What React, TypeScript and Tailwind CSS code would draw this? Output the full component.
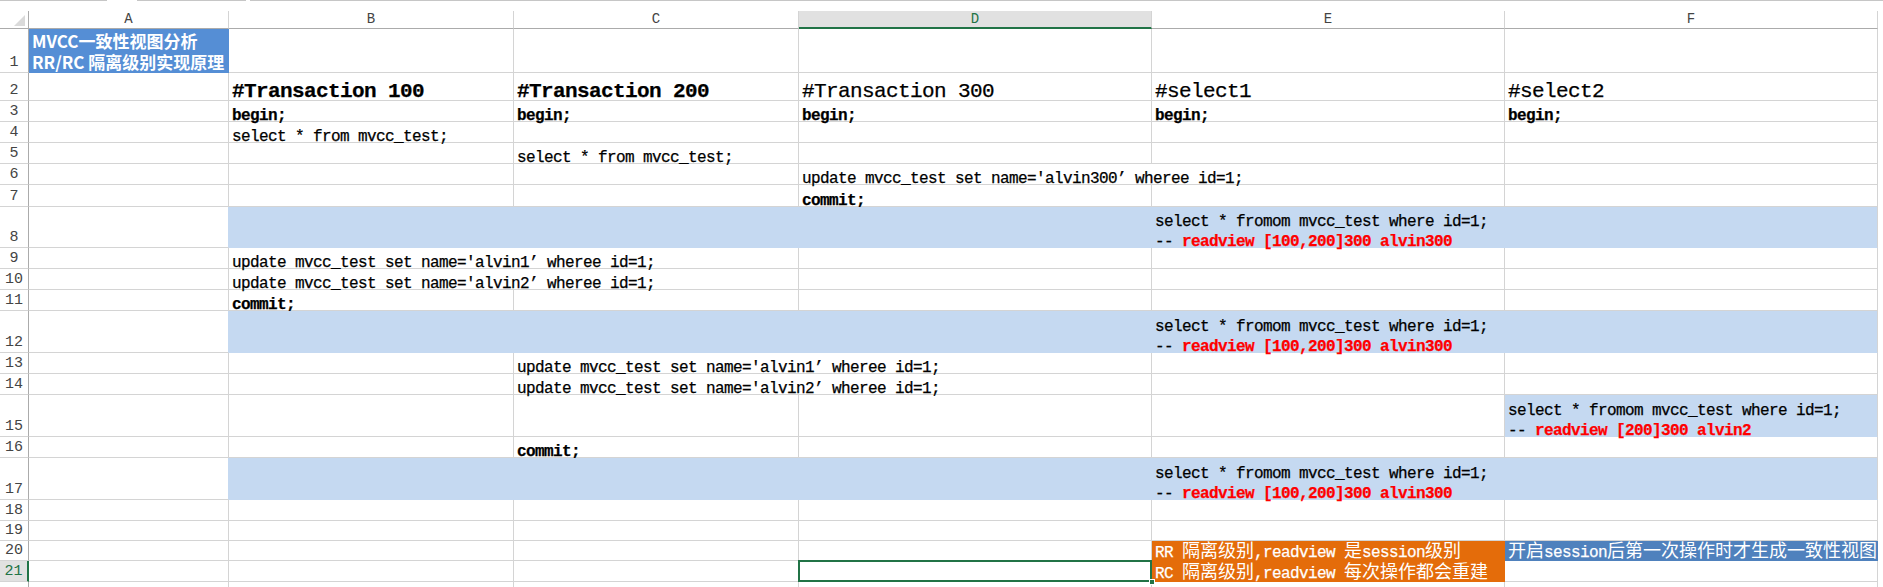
import React from "react";

type Kids = { children?: React.ReactNode };

const GRID = "border-[#d4d4d4]";
const BLUE = "bg-[#c5d9f1] border-[#c5d9f1]";

function L({ children }: Kids) {
  return <div className="leading-[20px]">{children}</div>;
}

function T({ children }: Kids) {
  return <div className="mb-[-5px]">{children}</div>;
}

function TU({ children }: Kids) {
  return <div className="mb-[-3px]">{children}</div>;
}

function R({ children }: Kids) {
  return <span className="font-bold text-[#ff0000]">{children}</span>;
}

function Z({ children }: Kids) {
  return (
    <span className="font-['Noto_Sans_CJK_SC',sans-serif] text-[18px] tracking-normal [-webkit-text-stroke:0px]">
      {children}
    </span>
  );
}

function H({ children, bold }: Kids & { bold?: boolean }) {
  return (
    <div
      className={`mb-[-2px] text-[21px] leading-[20px] tracking-[-0.6px] ${
        bold ? "font-bold" : ""
      }`}
    >
      {children}
    </div>
  );
}

function Cell({
  w,
  cls = GRID,
  children,
  rel,
}: Kids & { w: string; cls?: string; rel?: boolean }) {
  return (
    <div
      className={`${w} shrink-0 h-full border-r border-b ${cls} flex flex-col justify-end pl-[3px] whitespace-nowrap ${
        rel ? "relative" : ""
      }`}
    >
      {children}
    </div>
  );
}

function RowHead({ n, sel }: { n?: number; sel?: boolean }) {
  return (
    <div
      className={`w-[29px] shrink-0 h-full border-b flex items-end justify-center font-['Liberation_Mono',monospace] text-[15px] leading-[20px] tracking-normal [-webkit-text-stroke:0px] ${
        sel
          ? "bg-[#e1e1e1] text-[#217346] border-r-2 border-r-[#217346] border-b-[#d4d4d4]"
          : "text-[#444444] border-r border-r-[#ababab] border-b-[#d4d4d4]"
      }`}
    >
      <span className="mb-[-1px]">{n}</span>
    </div>
  );
}

function Row({ h, n, sel, children }: Kids & { h: string; n?: number; sel?: boolean }) {
  return (
    <div className={`flex ${h}`}>
      <RowHead n={n} sel={sel} />
      {children}
    </div>
  );
}

function ColHead({ w, label, sel }: { w: string; label: string; sel?: boolean }) {
  return (
    <div
      className={`${w} shrink-0 h-full flex items-center justify-center font-['Liberation_Mono',monospace] text-[14px] tracking-normal [-webkit-text-stroke:0px] border-r border-r-[#d4d4d4] ${
        sel
          ? "bg-[#e1e1e1] text-[#217346] border-b-2 border-b-[#217346]"
          : "text-[#444444] border-b border-b-[#ababab]"
      }`}
    >
      {label}
    </div>
  );
}

const A = "w-[200px]";
const B = "w-[285px]";
const C = "w-[285px]";
const D = "w-[353px]";
const E = "w-[353px]";
const F = "w-[373px]";

function EmptyRest() {
  return (
    <>
      <Cell w={B} />
      <Cell w={C} />
      <Cell w={D} />
      <Cell w={E} />
      <Cell w={F} />
    </>
  );
}

function BandRow({ h, n }: { h: string; n: number }) {
  return (
    <Row h={h} n={n}>
      <Cell w={A} cls="border-b-[#d4d4d4] border-r-[#c5d9f1]" />
      <Cell w="w-[923px]" cls={BLUE} />
      <Cell w={E} cls={BLUE}>
        <T>
          <L>select * fromom mvcc_test where id=1;</L>
          <L>
            -- <R>readview [100,200]300 alvin300</R>
          </L>
        </T>
      </Cell>
      <Cell w={F} cls="bg-[#c5d9f1] border-b-[#c5d9f1] border-r-[#d4d4d4]" />
    </Row>
  );
}

export default function App() {
  return (
    <div className="w-[1883px] h-[587px] overflow-hidden bg-white text-black font-['Liberation_Mono','Noto_Sans_CJK_SC',monospace] text-[16px] tracking-[-0.6px] [-webkit-text-stroke:0.25px]">
      {/* top strip */}
      <div className="h-[11px] flex">
        <div className="w-[107px] border-t border-[#c6c6c6]" />
        <div className="w-[30px]" />
        <div className="w-[109px] border-t border-[#c6c6c6]" />
        <div className="w-[4px]" />
        <div className="flex-1 border-t border-[#c6c6c6]" />
      </div>

      {/* column header */}
      <div className="flex h-[18px]">
        <div className="w-[29px] shrink-0 h-full border-r border-b border-[#ababab] flex items-end justify-end">
          <svg width="13" height="13" viewBox="0 0 13 13" className="mb-[1px] mr-[2px]">
            <polygon points="12,1 12,12 1,12" fill="#dadada" />
          </svg>
        </div>
        <ColHead w={A} label="A" />
        <ColHead w={B} label="B" />
        <ColHead w={C} label="C" />
        <ColHead w={D} label="D" sel />
        <ColHead w={E} label="E" />
        <ColHead w={F} label="F" />
      </div>

      {/* row 1 */}
      <Row h="h-[44px]" n={1}>
        <Cell w={A} cls="bg-[#558ed5] border-[#558ed5]">
          <div className="font-['Noto_Sans_CJK_SC',sans-serif] font-bold text-[17px] leading-[21px] tracking-normal text-white [-webkit-text-stroke:0px]">
            <div>MVCC一致性视图分析</div>
            <div>RR/RC 隔离级别实现原理</div>
          </div>
        </Cell>
        <EmptyRest />
      </Row>

      {/* row 2 */}
      <Row h="h-[28px]" n={2}>
        <Cell w={A} />
        <Cell w={B}>
          <H bold>#Transaction 100</H>
        </Cell>
        <Cell w={C}>
          <H bold>#Transaction 200</H>
        </Cell>
        <Cell w={D}>
          <H>#Transaction 300</H>
        </Cell>
        <Cell w={E}>
          <H>#select1</H>
        </Cell>
        <Cell w={F}>
          <H>#select2</H>
        </Cell>
      </Row>

      {/* row 3 */}
      <Row h="h-[21px]" n={3}>
        <Cell w={A} />
        <Cell w={B}>
          <T>
            <L>
              <b>begin;</b>
            </L>
          </T>
        </Cell>
        <Cell w={C}>
          <T>
            <L>
              <b>begin;</b>
            </L>
          </T>
        </Cell>
        <Cell w={D}>
          <T>
            <L>
              <b>begin;</b>
            </L>
          </T>
        </Cell>
        <Cell w={E}>
          <T>
            <L>
              <b>begin;</b>
            </L>
          </T>
        </Cell>
        <Cell w={F}>
          <T>
            <L>
              <b>begin;</b>
            </L>
          </T>
        </Cell>
      </Row>

      {/* row 4 */}
      <Row h="h-[21px]" n={4}>
        <Cell w={A} />
        <Cell w={B}>
          <T>
            <L>select * from mvcc_test;</L>
          </T>
        </Cell>
        <Cell w={C} />
        <Cell w={D} />
        <Cell w={E} />
        <Cell w={F} />
      </Row>

      {/* row 5 */}
      <Row h="h-[21px]" n={5}>
        <Cell w={A} />
        <Cell w={B} />
        <Cell w={C}>
          <T>
            <L>select * from mvcc_test;</L>
          </T>
        </Cell>
        <Cell w={D} />
        <Cell w={E} />
        <Cell w={F} />
      </Row>

      {/* row 6 */}
      <Row h="h-[21px]" n={6}>
        <Cell w={A} />
        <Cell w={B} />
        <Cell w={C} />
        <Cell w="w-[706px]">
          <T>
            <L>update mvcc_test set name='alvin300’ wheree id=1;</L>
          </T>
        </Cell>
        <Cell w={F} />
      </Row>

      {/* row 7 */}
      <Row h="h-[22px]" n={7}>
        <Cell w={A} />
        <Cell w={B} />
        <Cell w={C} />
        <Cell w={D}>
          <T>
            <L>
              <b>commit;</b>
            </L>
          </T>
        </Cell>
        <Cell w={E} />
        <Cell w={F} />
      </Row>

      <BandRow h="h-[41px]" n={8} />

      {/* row 9 */}
      <Row h="h-[21px]" n={9}>
        <Cell w={A} />
        <Cell w="w-[570px]">
          <T>
            <L>update mvcc_test set name='alvin1’ wheree id=1;</L>
          </T>
        </Cell>
        <Cell w={D} />
        <Cell w={E} />
        <Cell w={F} />
      </Row>

      {/* row 10 */}
      <Row h="h-[21px]" n={10}>
        <Cell w={A} />
        <Cell w="w-[570px]">
          <T>
            <L>update mvcc_test set name='alvin2’ wheree id=1;</L>
          </T>
        </Cell>
        <Cell w={D} />
        <Cell w={E} />
        <Cell w={F} />
      </Row>

      {/* row 11 */}
      <Row h="h-[21px]" n={11}>
        <Cell w={A} />
        <Cell w={B}>
          <T>
            <L>
              <b>commit;</b>
            </L>
          </T>
        </Cell>
        <Cell w={C} />
        <Cell w={D} />
        <Cell w={E} />
        <Cell w={F} />
      </Row>

      <BandRow h="h-[42px]" n={12} />

      {/* row 13 */}
      <Row h="h-[21px]" n={13}>
        <Cell w={A} />
        <Cell w={B} />
        <Cell w="w-[638px]">
          <T>
            <L>update mvcc_test set name='alvin1’ wheree id=1;</L>
          </T>
        </Cell>
        <Cell w={E} />
        <Cell w={F} />
      </Row>

      {/* row 14 */}
      <Row h="h-[21px]" n={14}>
        <Cell w={A} />
        <Cell w={B} />
        <Cell w="w-[638px]">
          <T>
            <L>update mvcc_test set name='alvin2’ wheree id=1;</L>
          </T>
        </Cell>
        <Cell w={E} />
        <Cell w={F} />
      </Row>

      {/* row 15 */}
      <Row h="h-[42px]" n={15}>
        <Cell w={A} />
        <Cell w={B} />
        <Cell w={C} />
        <Cell w={D} />
        <Cell w={E} />
        <Cell w={F} cls="bg-[#c5d9f1] border-b-[#c5d9f1] border-r-[#d4d4d4]">
          <T>
            <L>select * fromom mvcc_test where id=1;</L>
            <L>
              -- <R>readview [200]300 alvin2</R>
            </L>
          </T>
        </Cell>
      </Row>

      {/* row 16 */}
      <Row h="h-[21px]" n={16}>
        <Cell w={A} />
        <Cell w={B} />
        <Cell w={C}>
          <T>
            <L>
              <b>commit;</b>
            </L>
          </T>
        </Cell>
        <Cell w={D} />
        <Cell w={E} />
        <Cell w={F} />
      </Row>

      <BandRow h="h-[42px]" n={17} />

      {/* row 18 */}
      <Row h="h-[21px]" n={18}>
        <Cell w={A} />
        <EmptyRest />
      </Row>

      {/* row 19 */}
      <Row h="h-[20px]" n={19}>
        <Cell w={A} />
        <EmptyRest />
      </Row>

      {/* row 20 */}
      <Row h="h-[20px]" n={20}>
        <Cell w={A} />
        <Cell w={B} />
        <Cell w={C} />
        <Cell w={D} />
        <Cell w={E} cls="bg-[#e46c0a] border-[#e46c0a] text-white">
          <TU>
            <L>
              RR <Z>隔离级别</Z>,readview <Z>是</Z>session<Z>级别</Z>
            </L>
          </TU>
        </Cell>
        <Cell w={F} cls="bg-[#4f81bd] border-[#4f81bd] text-white">
          <TU>
            <L>
              <Z>开启</Z>session<Z>后第一次操作时才生成一致性视图</Z>
            </L>
          </TU>
        </Cell>
      </Row>

      {/* row 21 */}
      <Row h="h-[21px]" n={21} sel>
        <Cell w={A} />
        <Cell w={B} />
        <Cell w={C} />
        <Cell w={D} rel>
          <div className="absolute left-[-1px] top-[-1px] right-[-1px] bottom-[-1px] border-2 border-[#217346] z-10" />
          <div className="absolute right-[-4px] bottom-[-4px] w-[6px] h-[6px] bg-[#217346] border border-white z-20" />
        </Cell>
        <Cell w={E} cls="bg-[#e46c0a] border-[#e46c0a] text-white">
          <TU>
            <L>
              RC <Z>隔离级别</Z>,readview <Z>每次操作都会重建</Z>
            </L>
          </TU>
        </Cell>
        <Cell w={F} />
      </Row>

      {/* row 22 (only its top edge is visible) */}
      <Row h="h-[21px]">
        <Cell w={A} />
        <EmptyRest />
      </Row>
    </div>
  );
}
